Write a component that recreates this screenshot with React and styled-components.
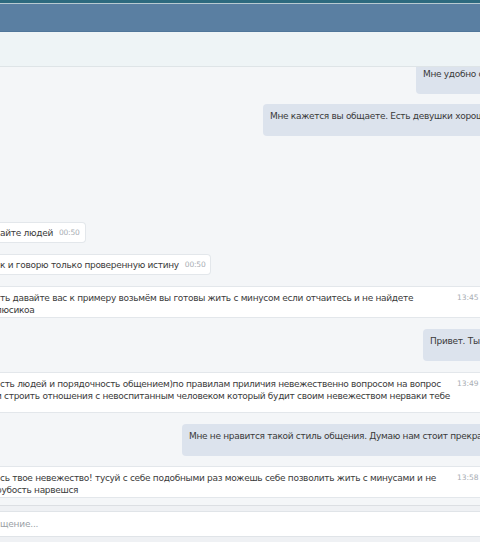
import React from "react";
import styled, { createGlobalStyle } from "styled-components";

const GlobalStyle = createGlobalStyle`
  html, body { margin: 0; padding: 0; background: #f4f6f8; overflow: hidden; }
  body { font-family: "DejaVu Sans", Verdana, sans-serif; }
`;

const Page = styled.div`
  width: 480px;
  height: 542px;
  overflow: hidden;
  display: flex;
  flex-direction: column;
  background: #f4f6f8;
`;

const TopStrip = styled.div`
  flex: none;
  height: 3px;
  background: #2d6a7f;
  border-bottom: 1px solid #b8cad1;
`;

const Header = styled.div`
  flex: none;
  height: 27px;
  background: #5a7fa2;
  border-bottom: 1px solid #50769a;
`;

const Toolbar = styled.div`
  flex: none;
  height: 34px;
  background: #eef4f6;
  border-bottom: 1px solid #dee4e7;
  position: relative;
  z-index: 1;
`;

const Messages = styled.div`
  flex: 1;
  overflow: hidden;
  background: #f4f6f8;
`;

const MessageList = styled.div`
  display: flex;
  flex-direction: column;
  margin-top: -5px;
`;

const OutRow = styled.div`
  display: flex;
  padding-left: ${(p) => p.$left}px;
  margin-top: ${(p) => p.$mt || 0}px;
  margin-right: -60px;
`;

const OutBubble = styled.div`
  flex: 1;
  height: 32px;
  box-sizing: border-box;
  background: #dce3ed;
  border-radius: 4px;
  padding: 5px 8px 13px 7px;
  font-size: 9px;
  line-height: 14px;
  letter-spacing: -0.3px;
  color: #3a3a3a;
  white-space: nowrap;
  overflow: hidden;
`;

const SmallBubble = styled.div`
  align-self: flex-start;
  display: flex;
  align-items: center;
  gap: 6px;
  height: 21px;
  box-sizing: border-box;
  margin-top: ${(p) => p.$mt || 0}px;
  background: #fff;
  border: 1px solid #e3e7eb;
  border-left: none;
  border-radius: 0 4px 4px 0;
  padding: 0 5px 0 0;
  font-size: 9px;
  line-height: 12px;
  letter-spacing: -0.3px;
  color: #3a3a3a;
  white-space: nowrap;
`;

const Time = styled.span`
  font-size: 7.5px;
  letter-spacing: -0.2px;
  color: #a8adb3;
`;

const InRow = styled.div`
  display: flex;
  gap: 6px;
  height: ${(p) => p.$h}px;
  box-sizing: border-box;
  margin-top: ${(p) => p.$mt || 0}px;
  background: #fff;
  border-top: 1px solid #e3e7eb;
  border-bottom: 1px solid #e3e7eb;
  padding-top: 5px;
`;

const InText = styled.div`
  flex: 1;
  min-width: 0;
  overflow: hidden;
  font-size: 9px;
  line-height: 12px;
  letter-spacing: -0.3px;
  color: #3a3a3a;
  white-space: nowrap;
`;

const Line = styled.div`
  margin-left: ${(p) => p.$shift || 0}px;
  height: 12px;
`;

const RowTime = styled.div`
  flex: none;
  width: 23px;
  font-size: 7.5px;
  line-height: 12px;
  color: #a8adb3;
`;

const ComposerWrap = styled.div`
  flex: none;
  padding-top: 7px;
  background: #f4f6f8;
`;

const Composer = styled.div`
  border-top: 1px solid #dcdfe3;
  background: #eff1f4;
  padding: 5px 0;
`;

const Input = styled.div`
  height: 24px;
  background: #fff;
  border-top: 1px solid #e0e4e8;
  border-bottom: 1px solid #e0e4e8;
  display: flex;
  align-items: center;
  font-size: 9px;
  letter-spacing: -0.2px;
  color: #9a9fa6;
  white-space: nowrap;
`;

export default function App() {
  return (
    <>
      <GlobalStyle />
      <Page>
        <TopStrip />
        <Header />
        <Toolbar />
        <Messages>
          <MessageList>
            <OutRow $left={416}>
              <OutBubble>Мне удобно общаться</OutBubble>
            </OutRow>
            <OutRow $left={263} $mt={10}>
              <OutBubble>Мне кажется вы общаете. Есть девушки хорошие</OutBubble>
            </OutRow>
            <SmallBubble $mt={86}>
              <span>айте людей</span>
              <Time>00:50</Time>
            </SmallBubble>
            <SmallBubble $mt={11}>
              <span>к и говорю только проверенную истину</span>
              <Time>00:50</Time>
            </SmallBubble>
            <InRow $mt={11} $h={32}>
              <InText>
                <Line>ть давайте вас к примеру возьмём вы готовы жить с минусом если отчаитесь и не найдете</Line>
                <Line $shift={-4}>люсикоа</Line>
              </InText>
              <RowTime>13:45</RowTime>
            </InRow>
            <OutRow $left={423} $mt={11}>
              <OutBubble>Привет. Ты</OutBubble>
            </OutRow>
            <InRow $mt={11} $h={41}>
              <InText>
                <Line>сть людей и порядочность общением)по правилам приличия невежественно вопросом на вопрос</Line>
                <Line $shift={-4}>и строить отношения с невоспитанным человеком который будит своим невежеством нерваки тебе</Line>
              </InText>
              <RowTime>13:49</RowTime>
            </InRow>
            <OutRow $left={182} $mt={11}>
              <OutBubble>Мне не нравится такой стиль общения. Думаю нам стоит прекратить</OutBubble>
            </OutRow>
            <InRow $mt={10} $h={32}>
              <InText>
                <Line>сь твое невежество! тусуй с себе подобными раз можешь себе позволить жить с минусами и не</Line>
                <Line $shift={-4}>рубость нарвешся</Line>
              </InText>
              <RowTime>13:58</RowTime>
            </InRow>
          </MessageList>
        </Messages>
        <ComposerWrap>
          <Composer>
            <Input>щение...</Input>
          </Composer>
        </ComposerWrap>
      </Page>
    </>
  );
}
